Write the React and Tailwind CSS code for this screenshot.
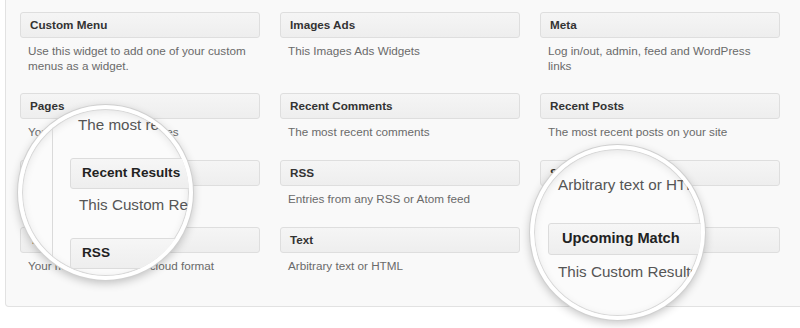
const widgets = [
  { title: "Custom Menu", desc: "Use this widget to add one of your custom menus as a widget." },
  { title: "Images Ads", desc: "This Images Ads Widgets" },
  { title: "Meta", desc: "Log in/out, admin, feed and WordPress links" },
  { title: "Pages", desc: "Your site\u2019s WordPress Pages" },
  { title: "Recent Comments", desc: "The most recent comments" },
  { title: "Recent Posts", desc: "The most recent posts on your site" },
  { title: "Recent Results", desc: "This Custom Results Widget" },
  { title: "RSS", desc: "Entries from any RSS or Atom feed" },
  { title: "Search", desc: "A search form for your site" },
  { title: "Tag Cloud", desc: "Your most used tags in cloud format" },
  { title: "Text", desc: "Arbitrary text or HTML" },
  { title: "Upcoming Match", desc: "This Custom Results Widget" },
];

function Widget({ title, desc }) {
  return (
    <div className="w-[240px]">
      <div className="h-[26px] flex items-center px-[9px] rounded-[3px] border border-[#dedede] bg-linear-to-b from-[#f5f5f5] to-[#eeeeee] font-bold text-[11.7px] text-[#333]">
        {title}
      </div>
      <p className="mt-[5px] px-[8px] text-[11.7px] leading-[15px] text-[#6a6a6a]">{desc}</p>
    </div>
  );
}

// magnifier glass, sits over the widget grid
function Lens({ className, children }) {
  return (
    <div
      className={`absolute w-[175px] h-[175px] rounded-full overflow-hidden border-[4px] border-white bg-[#fbfbfb] shadow-[0_0_0_1px_#d0d0d0,0_3px_10px_rgba(0,0,0,0.24),inset_0_0_0_1px_#d8d8d8,inset_0_2px_8px_rgba(0,0,0,0.10)] ${className}`}
    >
      {children}
    </div>
  );
}

function ZoomBox({ className, title }) {
  return (
    <div
      className={`w-[320px] flex items-center rounded-[3px] border border-[#dcdcdc] bg-linear-to-b from-[#f6f6f6] to-[#eeeeee] font-bold text-[#222] ${className}`}
    >
      {title}
    </div>
  );
}

function ZoomText({ className = "", children }) {
  return (
    <p className={`whitespace-nowrap text-[15.2px] leading-[18px] text-[#555] ${className}`}>{children}</p>
  );
}

export default function App() {
  return (
    <div className="relative w-[800px] h-[328px] overflow-hidden bg-white font-['Liberation_Sans',Arial,sans-serif]">
      <div className="ml-[5px] w-[820px] h-[307px] border-l border-r border-b border-[#e2e2e2] rounded-bl-[4px] bg-[#f9f9f9] pl-[14px] pt-[12px]">
        <div className="grid grid-cols-[240px_240px_240px] grid-rows-[81px_67px_67px_67px] gap-x-5">
          {widgets.map((w) => (
            <Widget key={w.title + w.desc} {...w} />
          ))}
        </div>
      </div>

      <Lens className="left-[18px] top-[105px]">
        <div className="ml-[30px] h-full border-l border-[#dadada] pl-[17px] pt-[7px]">
          <ZoomText className="pl-[8px]">The most recent posts on your site</ZoomText>
          <ZoomBox className="mt-[24px] h-[31px] pl-[11px] text-[13.6px]" title="Recent Results" />
          <ZoomText className="mt-[7px] pl-[9px]">This Custom Results Widget</ZoomText>
          <ZoomBox className="mt-[24px] h-[31px] pl-[11px] text-[13.6px]" title="RSS" />
        </div>
      </Lens>

      <Lens className="left-[530px] top-[145px]">
        <div className="pl-[14px] pt-[27px]">
          <ZoomText className="pl-[10px]">Arbitrary text or HTML</ZoomText>
          <ZoomBox className="mt-[29px] h-[32px] pl-[13px] text-[14.6px]" title="Upcoming Match" />
          <ZoomText className="mt-[8px] pl-[10px]">This Custom Results Widget</ZoomText>
        </div>
      </Lens>
    </div>
  );
}
